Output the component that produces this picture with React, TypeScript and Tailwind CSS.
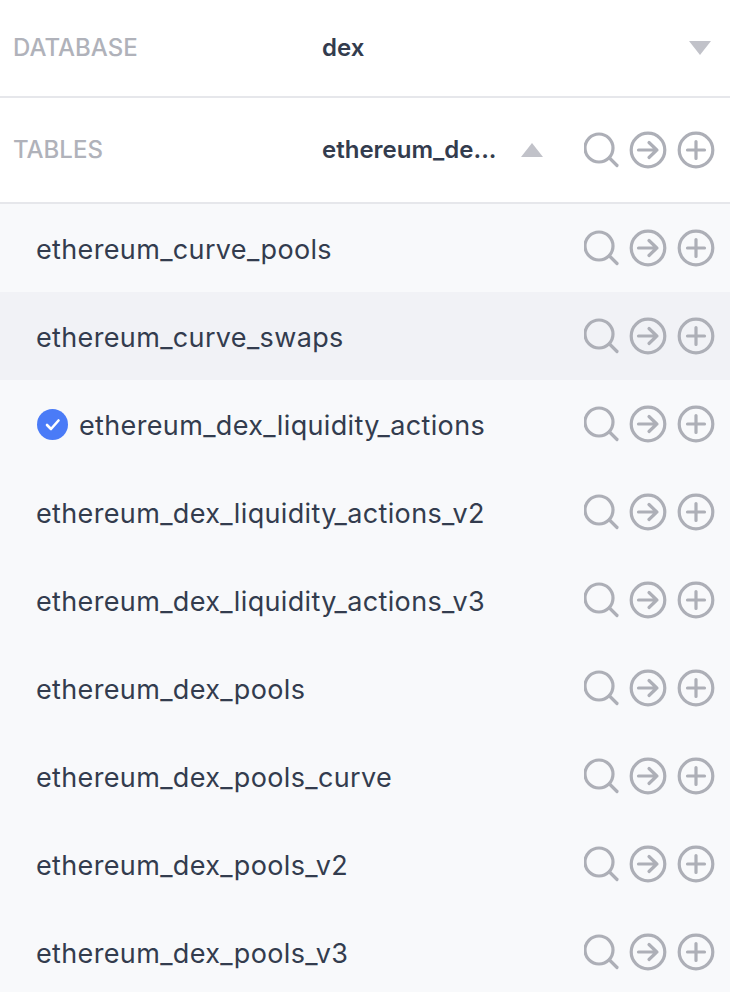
const tables = [
  "ethereum_curve_pools",
  "ethereum_curve_swaps",
  "ethereum_dex_liquidity_actions",
  "ethereum_dex_liquidity_actions_v2",
  "ethereum_dex_liquidity_actions_v3",
  "ethereum_dex_pools",
  "ethereum_dex_pools_curve",
  "ethereum_dex_pools_v2",
  "ethereum_dex_pools_v3",
];

function RowIcons() {
  return (
    <div className="flex items-center text-[#adafb7] shrink-0">
      <svg width="132" height="38" viewBox="0 0 132 38" fill="none" stroke="currentColor" strokeWidth="3.2">
        <circle cx="15" cy="17" r="14" />
        <path d="M25.500 27 L33 34.500" strokeLinecap="round" />
        <circle cx="64" cy="19" r="16.800" />
        <path d="M54.500 19 H73 M65 11.500 L72.800 19 L65 26.500" strokeLinecap="round" strokeLinejoin="round" />
        <circle cx="112" cy="19" r="16.800" />
        <path d="M112 10.500 V27.500 M103.500 19 H120.500" strokeLinecap="round" />
      </svg>
    </div>
  );
}

function Row({ name, hover, selected }: { name: string; hover?: boolean; selected?: boolean }) {
  return (
    <div className={`flex items-center justify-between h-[88px] pl-9 pr-[14px] ${hover ? "bg-[#f1f2f6]" : ""}`}>
      <div className="flex items-center min-w-0">
        {selected && (
          <svg className="mr-[10px] shrink-0" width="33" height="33" viewBox="0 0 33 33" fill="none">
            <circle cx="16.500" cy="16.500" r="15.500" fill="#4a7bf7" />
            <path d="M11 17 L15 21 L22.500 12.500" stroke="#fff" strokeWidth="2.600" strokeLinecap="round" strokeLinejoin="round" />
          </svg>
        )}
        <span className="pt-[2px] text-[27px] tracking-[0.35px] leading-none text-[#333c4e] whitespace-nowrap">{name}</span>
      </div>
      <RowIcons />
    </div>
  );
}

export default function App() {
  return (
    <div className="w-[730px] h-[992px] overflow-hidden bg-[#f8f9fb] font-['Inter',sans-serif]">
      <div className="flex items-center h-[98px] bg-white border-b-2 border-[#e6e7eb] pl-[13px] pr-[19px]">
        <span className="w-[309px] text-[24px] font-medium text-[#b0b2ba]">DATABASE</span>
        <span className="flex-1 text-[24px] font-semibold text-[#333c4e]">dex</span>
        <div className="w-0 h-0 border-x-[11px] border-x-transparent border-t-[14px] border-t-[#c1c2c9]" />
      </div>
      <div className="flex items-center h-[106px] bg-white border-b-2 border-[#e6e7eb] pl-[13px] pr-[14px]">
        <span className="w-[309px] text-[24px] font-medium text-[#b0b2ba]">TABLES</span>
        <span className="w-[178px] text-[24px] font-semibold text-[#333c4e] whitespace-nowrap">ethereum_de...</span>
        <div className="ml-[21px] w-0 h-0 border-x-[11px] border-x-transparent border-b-[14px] border-b-[#c1c2c9]" />
        <div className="ml-auto">
          <RowIcons />
        </div>
      </div>
      <div>
        {tables.map((t, i) => (
          <Row key={t} name={t} hover={i === 1} selected={i === 2} />
        ))}
      </div>
    </div>
  );
}
